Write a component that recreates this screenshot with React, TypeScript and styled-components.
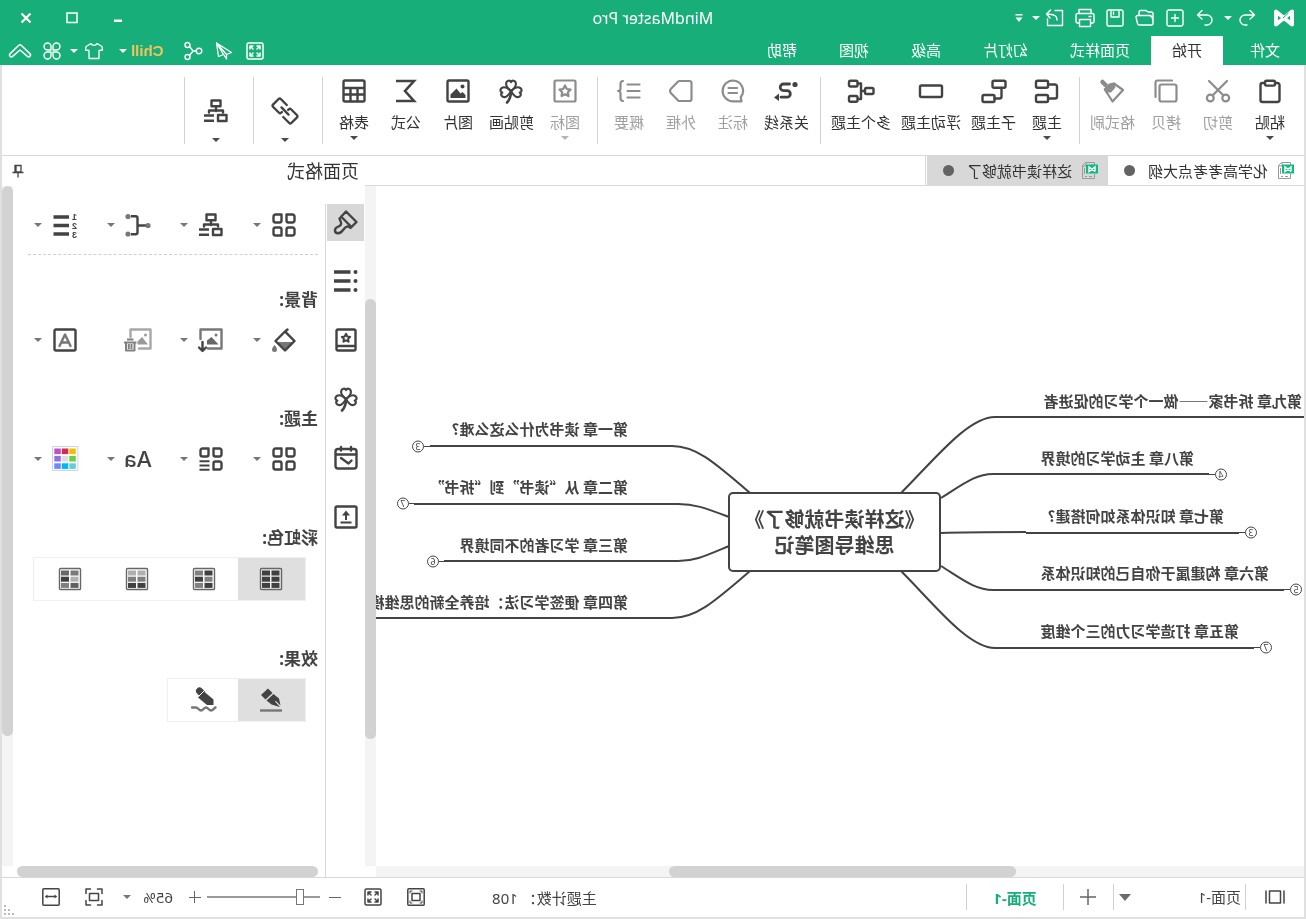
import React from 'react';
import styled, { createGlobalStyle } from 'styled-components';

const green = '#17ae7a';
const ink = '#434343';
const dim = '#8c8c8c';
const line = '#d9d9d9';
const uiFont = "'Noto Sans', 'Noto Sans CJK SC', sans-serif";
const cjkFont = "'Noto Sans CJK SC', 'Noto Sans', sans-serif";

const GlobalStyle = createGlobalStyle`
  * { box-sizing: border-box; }
  body { margin: 0; background: #fff; font-family: ${uiFont}; font-size: 15px; color: #333; }
  button, select, input { font: inherit; color: inherit; margin: 0; padding: 0; border: 0; background: none; }
  svg { display: block; flex: none; overflow: visible; }
`;

/* ---------- shell ---------- */

const Shell = styled.div`
  display: flex;
  flex-direction: column;
  height: 100vh;
  min-height: 800px;
  overflow: hidden;
  transform: scaleX(-1);
`;

const Header = styled.header`
  flex: none;
  background: ${green};
  color: #fff;
`;

const Frame = styled.div`
  flex: 1;
  min-height: 0;
  display: flex;
  flex-direction: column;
  border: 2px solid #e0e0e0;
  border-top: 0;
`;

const TitleBar = styled.div`
  display: grid;
  grid-template-columns: 1fr auto 1fr;
  align-items: center;
  height: 36px;
`;

const QuickAccess = styled.div`
  display: flex;
  align-items: center;
  padding-left: 12px;
`;

const Logo = styled.span`
  margin-right: 12px;
`;

const QuickButton = styled.button<{ $w?: number }>`
  display: flex;
  align-items: center;
  justify-content: center;
  width: ${(p) => p.$w ?? 30}px;
  height: 30px;
`;

const CaretButton = styled.button`
  display: flex;
  align-items: center;
  width: 12px;
  height: 30px;
`;

const Title = styled.h1`
  margin: 0;
  font-size: 16px;
  line-height: 36px;
  font-weight: 400;
`;

const WindowControls = styled.div`
  display: flex;
  justify-content: flex-end;
  padding-right: 3px;
`;

const WindowButton = styled.button`
  display: flex;
  align-items: center;
  justify-content: center;
  width: 46px;
  height: 32px;
`;

const Caret = styled.i<{ $color?: string }>`
  flex: none;
  width: 8px;
  height: 4px;
  border: 4px solid transparent;
  border-bottom-width: 0;
  border-top-color: ${(p) => p.$color ?? '#444'};
`;

const MenuRow = styled.nav`
  display: flex;
  height: 29px;
`;

const MenuTab = styled.button<{ $active?: boolean; $file?: boolean }>`
  padding: 0 ${(p) => (p.$file ? '27px 0 26px' : '21px')};
  line-height: 29px;
  color: ${(p) => (p.$active ? '#333' : '#fff')};
  background: ${(p) => (p.$active ? '#fff' : 'transparent')};
`;

const MenuTools = styled.div`
  display: flex;
  align-items: center;
  margin-left: auto;
  padding-right: 9px;
`;

const MenuIcon = styled.button`
  display: flex;
  align-items: center;
  justify-content: center;
  width: 31px;
  height: 29px;
`;

const MenuDrop = styled.button<{ $gap: number; $before: number }>`
  display: flex;
  align-items: center;
  gap: ${(p) => p.$gap}px;
  height: 29px;
  margin-left: ${(p) => p.$before}px;
`;

const Chill = styled.span`
  color: #f5c35b;
  font-family: 'Liberation Sans', sans-serif;
  font-weight: 700;
`;

/* ---------- ribbon ---------- */

const Ribbon = styled.div`
  flex: none;
  display: flex;
  height: 91px;
  padding-left: 2px;
  border-bottom: 1px solid ${line};
`;

const RibbonGroup = styled.div`
  display: flex;
  position: relative;
  padding: 0 6px;
  &::after {
    content: '';
    position: absolute;
    right: 0;
    top: 12px;
    width: 1px;
    height: 67px;
    background: #d2d2d2;
  }
`;

const RibbonButton = styled.button<{ $dim?: boolean }>`
  display: flex;
  flex-direction: column;
  align-items: center;
  min-width: 52px;
  padding: 14px 5px 0;
  color: ${(p) => (p.$dim ? dim : ink)};
`;

const RibbonLabel = styled.span<{ $dim?: boolean }>`
  margin: 9px 0 4px;
  line-height: 20px;
  color: ${(p) => (p.$dim ? '#a0a0a0' : '#333')};
`;

const RibbonSplit = styled.button`
  display: flex;
  flex-direction: column;
  align-items: center;
  gap: 15px;
  width: 57px;
  padding: 34px 0 0 5px;
  color: ${ink};
`;

/* ---------- workspace ---------- */

const Workspace = styled.div`
  flex: 1;
  min-height: 0;
  display: flex;
`;

const Center = styled.main`
  flex: 1;
  min-width: 0;
  display: flex;
  flex-direction: column;
`;

const DocTabs = styled.div`
  flex: none;
  display: flex;
  height: 30px;
  border-bottom: 1px solid ${line};
`;

const DocTab = styled.button<{ $active?: boolean }>`
  display: flex;
  align-items: center;
  padding: 0 16px 0 10px;
  background: ${(p) => (p.$active ? '#d8d8d8' : '#fff')};
`;

const DocTabEnd = styled.span`
  width: 2px;
  border-right: 1px solid ${line};
`;

const DocName = styled.span`
  margin: 0 13px 0 10px;
`;

const Dot = styled.i`
  width: 11px;
  height: 11px;
  border-radius: 50%;
  background: #636363;
`;

const CanvasGrid = styled.div`
  flex: 1;
  min-height: 0;
  display: grid;
  grid-template: minmax(0, 1fr) 11px / minmax(0, 1fr) 11px;
`;

const Canvas = styled.div`
  position: relative;
  display: grid;
  place-content: center;
  overflow: hidden;
`;

const Stage = styled.div`
  position: relative;
  width: 928px;
  height: 680px;
`;

const Links = styled.svg`
  width: 100%;
  height: 100%;
`;

const Topic = styled.div`
  position: absolute;
  font-family: ${cjkFont};
  font-weight: 700;
  line-height: 20px;
  white-space: nowrap;
  color: ${ink};
`;

const RootTopic = styled.div`
  position: absolute;
  left: 363px;
  top: 306px;
  width: 213px;
  height: 80px;
  padding-top: 12px;
  border: 2px solid ${ink};
  border-radius: 5px;
  background: #fff;
  font: 700 20px/26px ${cjkFont};
  text-align: center;
  white-space: pre-line;
  color: ${ink};
`;

const VTrack = styled.div`
  background: #f4f4f4;
`;

const HTrack = styled.div`
  background: #f4f4f4;
`;

const VThumb = styled.div<{ $from: number; $size: number }>`
  position: relative;
  top: ${(p) => p.$from}%;
  height: ${(p) => p.$size}%;
  border-radius: 6px;
  background: #d2d2d2;
`;

const HThumb = styled.div<{ $from: number; $size: number }>`
  height: 11px;
  margin-left: ${(p) => p.$from}%;
  width: ${(p) => p.$size}%;
  border-radius: 6px;
  background: #d2d2d2;
`;

/* ---------- side panel ---------- */

const Panel = styled.aside`
  flex: none;
  width: 363px;
  display: flex;
  flex-direction: column;
`;

const PanelHead = styled.div`
  flex: none;
  display: flex;
  align-items: center;
  justify-content: space-between;
  height: 30px;
  padding: 0 10px 0 6px;
`;

const PanelTitle = styled.h2`
  margin: 0;
  font-size: 18px;
  line-height: 30px;
  font-weight: 400;
`;

const PlainButton = styled.button`
  display: flex;
  align-items: center;
  justify-content: center;
`;

const PanelBody = styled.div`
  flex: 1;
  min-height: 0;
  display: flex;
`;

const Tools = styled.div`
  flex: none;
  display: flex;
  flex-direction: column;
  gap: 22px;
  width: 39px;
  padding: 18px 1px 0;
`;

const ToolButton = styled.button<{ $active?: boolean }>`
  display: flex;
  align-items: center;
  justify-content: center;
  width: 37px;
  height: 37px;
  padding: 0 1px 1px 0;
  color: ${ink};
  background: ${(p) => (p.$active ? '#d8d8d8' : 'transparent')};
`;

const Content = styled.div`
  flex: 1;
  min-width: 0;
  display: flex;
  flex-direction: column;
  margin-top: 18px;
  border-left: 1px solid ${line};
`;

const Sections = styled.div`
  flex: 1;
  min-height: 0;
  overflow: hidden;
`;

const OptionRow = styled.div`
  display: flex;
  height: 42px;
  padding-left: 29px;
`;

const OptionButton = styled.button<{ $dim?: boolean }>`
  flex: none;
  display: flex;
  align-items: center;
  gap: 11px;
  width: 73px;
  color: ${(p) => (p.$dim ? '#9a9a9a' : ink)};
`;

const Rule = styled.hr`
  height: 0;
  margin: 8px 15px 33px 7px;
  border: 0;
  border-top: 1px dashed #cfcfcf;
`;

const Section = styled.section`
  margin-bottom: 46px;
`;

const Heading = styled.h3`
  margin: 0 0 7px 7px;
  font-size: 17px;
  line-height: 24px;
  font-weight: 700;
  color: ${ink};
`;

const AaGlyph = styled.span`
  width: 24px;
  font: 500 22px/30px Inter, sans-serif;
  display: flex;
  justify-content: center;
`;

const Segments = styled.div`
  display: inline-flex;
  height: 44px;
  margin-left: 19px;
  padding-right: 3px;
  border: 1px solid #f0f0f0;
  vertical-align: top;
`;

const Segment = styled.button<{ $active?: boolean }>`
  display: flex;
  align-items: center;
  justify-content: center;
  width: 67px;
  color: ${ink};
  background: ${(p) => (p.$active ? '#dfdfdf' : '#fff')};
`;

const PanelHBar = styled.div`
  flex: none;
  height: 11px;
  padding: 0 4px 0 7px;
`;

const PanelVBar = styled.div`
  flex: none;
  width: 11px;
  margin-bottom: 11px;
  background: #f4f4f4;
`;

/* ---------- status bar ---------- */

const StatusBar = styled.footer`
  flex: none;
  position: relative;
  display: flex;
  align-items: center;
  height: 40px;
  padding-bottom: 1px;
  border-top: 1px solid ${line};
  color: #444;
`;

const StatusCell = styled.button<{ $w: number }>`
  display: flex;
  align-items: center;
  justify-content: center;
  width: ${(p) => p.$w}px;
  height: 26px;
  border-right: 1px solid #d0d0d0;
`;

const PageSelectWrap = styled.label`
  position: relative;
  width: 132px;
  height: 26px;
  border-right: 1px solid #d0d0d0;
`;

const PageSelect = styled.select`
  appearance: none;
  width: 100%;
  height: 26px;
  padding-left: 4px;
`;

const PageCaret = styled.i`
  position: absolute;
  right: 5px;
  top: 10px;
  border: 6px solid transparent;
  border-top: 7px solid #6b6b6b;
  border-bottom: 0;
  pointer-events: none;
`;

const PageName = styled.span`
  color: ${green};
  font-weight: 700;
`;

const Count = styled.span`
  margin: 0 65px 0 auto;
  white-space: pre;
`;

const StatusIcon = styled.button<{ $w?: number; $before: number }>`
  display: flex;
  align-items: center;
  justify-content: center;
  width: ${(p) => p.$w ?? 22}px;
  height: 26px;
  margin-left: ${(p) => p.$before}px;
`;

const ZoomRange = styled.input`
  appearance: none;
  width: 113px;
  height: 20px;
  margin-left: 9px;
  background: linear-gradient(#999, #999) center / 100% 2px no-repeat;
  &::-webkit-slider-thumb {
    appearance: none;
    width: 8px;
    height: 16px;
    border: 1px solid #777;
    background: #fff;
  }
`;

const ZoomValue = styled.button`
  display: flex;
  align-items: center;
  justify-content: space-between;
  width: 50px;
  margin: 0 18px 0 16px;
`;

const Grip = styled.span`
  align-self: flex-end;
  margin: 0 2px 1px 26px;
`;

/* ---------- icons ---------- */

const Ico: React.FC<{ s?: number; w?: number; children: React.ReactNode }> = ({ s = 24, w = 2.4, children }) => (
  <svg width={s} height={s} viewBox={`0 0 ${s} ${s}`} fill="none" stroke="currentColor" strokeWidth={w} strokeLinejoin="round" strokeLinecap="round" aria-hidden="true">
    {children}
  </svg>
);

const F = { fill: 'currentColor', stroke: 'none' };

const PasteIcon = () => (
  <Ico><rect x="2.500" y="4" width="19" height="19" rx="2" /><rect x="7" y="1.800" width="10" height="4.800" rx="1.500" fill="#fff" /></Ico>
);
const CutIcon = () => (
  <Ico w={2.2}><circle cx="4.300" cy="19" r="3.400" /><circle cx="19.700" cy="19" r="3.400" /><path d="M3 2 17.500 16.500M21 2 6.500 16.500" /></Ico>
);
const CopyIcon = () => (
  <Ico w={2.2}><rect x="1.500" y="5.500" width="17" height="17" rx="2" /><path d="M6 1.500H20.500a2 2 0 0 1 2 2V18" /></Ico>
);
const FormatIcon = () => (
  <Ico w={2.2}><path d="M21.500 3 18.500 6" strokeWidth="4.500" /><path d="M10 4.500 1 11 11.500 22.500 18.500 11.500Z" /><path {...F} d="M10 3.500 8.500 8.500 13 13.500 18.500 13.500 20.500 10 15 4.500Z" /></Ico>
);
const TopicIcon = () => (
  <Ico><rect x="11" y="1.800" width="12" height="7" rx="1.500" /><rect x="11" y="16" width="12" height="7" rx="1.500" /><path d="M10 5.500H4a2 2 0 0 0-2 2V17.500a2 2 0 0 0 2 2H10" /></Ico>
);
const SubtopicIcon = () => (
  <Ico><rect x="-.5" y="1.800" width="13" height="7" rx="1.500" /><rect x="10.500" y="16" width="12" height="7" rx="1.500" /><path d="M3.500 9V17.500a2 2 0 0 0 2 2H10.500" /></Ico>
);
const FloatIcon = () => <Ico><rect x="1" y="6.500" width="22" height="11.500" rx="1.500" /></Ico>;
const MultiIcon = () => (
  <Ico><rect x="-.5" y="9" width="8.500" height="6" rx="1.500" /><rect x="15.500" y="1.800" width="8.500" height="5.700" rx="1.500" /><rect x="15.500" y="17" width="8.500" height="5.700" rx="1.500" /><path d="M8.500 12H12M15 4.500H12V20H15" /></Ico>
);
const RelationIcon = () => (
  <Ico w={2.8}><circle {...F} cx="3" cy="5.500" r="2.600" /><path d="M8.500 5H14.500a3.300 3.300 0 0 1 0 6.600H11a3.300 3.300 0 0 0 0 6.600H17" /><path {...F} d="M19 14.500 24 18.500 19 22Z" /></Ico>
);
const CalloutIcon = () => (
  <Ico w={2.2}><path d="M12 1.500a10.300 10.300 0 1 1 0 20.800H3.500l.8-4A10.300 10.300 0 0 1 12 1.500Z" /><path d="M8 9H16.500M8 14H16.500" /></Ico>
);
const BoundaryIcon = () => <Ico w={2.2}><path d="M3.500 2H13.500a2 2 0 0 1 1.400.6L22 9.800a3 3 0 0 1 0 4.400L14.900 21.400a2 2 0 0 1-1.400.6H3.500a2 2 0 0 1-2-2V4a2 2 0 0 1 2-2Z" /></Ico>;
const SummaryIcon = () => (
  <Ico w={2.2}><path d="M1.500 5.500H13.500M1.500 12H13.500M1.500 18.500H13.500M18 2c2 0 2.500 1 2.500 3V9.500c0 1.500.5 2.500 2.500 2.500-2 0-2.500 1-2.500 2.500V19c0 2-.5 3-2.500 3" /></Ico>
);
const star = 'M12 6.500 13.800 10 17.600 10.500 14.800 13.200 15.500 17 12 15.200 8.500 17 9.200 13.200 6.400 10.500 10.200 10Z';
const MarkIcon = () => <Ico w={2.2}><rect x="1.500" y="1.500" width="21" height="21" rx="1.500" /><path d={star} /></Ico>;
const leaf = 'M0 0C-3.500-2.800-5.200-4.600-4.900-7.400-4.500-10.800-1-11.200 0-8.800 1-11.200 4.500-10.800 4.900-7.400 5.200-4.600 3.500-2.800 0 0Z';
const CloverIcon = () => (
  <Ico w={2.1}>
    <g transform="translate(12 12)"><path d={leaf} /><path d={leaf} transform="rotate(100)" /><path d={leaf} transform="rotate(-100)" /></g>
    <path d="M12 12C12 17 13.500 21 16 23.500" strokeWidth="2.600" />
  </Ico>
);
const PictureIcon = () => (
  <Ico><rect x="1.500" y="1.500" width="21" height="21" rx="1.500" /><circle {...F} cx="7.500" cy="7.500" r="2" /><path {...F} d="M4.500 19V16L7.500 13 9.500 14.500 13.500 9.500 19.500 15.500V19Z" /></Ico>
);
const SigmaIcon = () => <Ico w={2.6}><path strokeLinejoin="miter" strokeLinecap="butt" d="M22 2H4L13 12 4 22H22" /></Ico>;
const TableIcon = () => <Ico><rect x="1.500" y="1.500" width="21" height="21" rx="1.500" /><path d="M2 9H22M2 15.500H22M8.500 9V22M15.500 9V22" /></Ico>;
const LinkIcon = () => (
  <Ico><g transform="rotate(-45 12 12)"><path d="M9 17.500H.5A1.500 1.500 0 0 1-1 16V8A1.500 1.500 0 0 1 .5 6.500H9A1.500 1.500 0 0 1 10.500 8V9M15 6.500H23.500A1.500 1.500 0 0 1 25 8V16A1.500 1.500 0 0 1 23.500 17.500H15A1.500 1.500 0 0 1 13.500 16V15M7 12H17" /></g></Ico>
);
const OrgIcon = () => (
  <Ico><rect x="7.500" y="1.500" width="9" height="5.800" /><path d="M12 8V12M5 13.500V11.500H19V13.500" /><rect x="1.500" y="16" width="8.500" height="6" /><path strokeLinecap="butt" d="M14 16.500H24M14 21.800H24" /></Ico>
);
const GridIcon: React.FC<{ lines?: boolean }> = ({ lines }) => (
  <Ico>
    <path d="M1.500 3.500a2 2 0 0 1 2-2H9.500V7.500a2 2 0 0 1-2 2H3.500a2 2 0 0 1-2-2Z" />
    <path d="M22.500 3.500a2 2 0 0 0-2-2H14.500V7.500a2 2 0 0 0 2 2H20.500a2 2 0 0 0 2-2Z" />
    <path d="M1.500 16.500a2 2 0 0 1 2-2H7.500a2 2 0 0 1 2 2V22.500H3.500a2 2 0 0 1-2-2Z" />
    {lines
      ? <path strokeWidth="2" strokeLinecap="butt" d="M13.500 14.200H23.500M13.500 18.500H23.500M13.500 22.800H23.500" />
      : <path d="M22.500 16.500a2 2 0 0 0-2-2H16.500a2 2 0 0 0-2 2V22.500H20.500a2 2 0 0 0 2-2Z" />}
  </Ico>
);
const BranchIcon = () => (
  <Ico><path strokeLinecap="butt" d="M4 12.500H12M19 3.300H14.500a2 2 0 0 0-2 2V19.300a2 2 0 0 0 2 2H19" /><g {...F} fill="#777"><circle cx="2" cy="12.500" r="2.600" /><circle cx="22" cy="3.500" r="2.600" /><circle cx="22" cy="21" r="2.600" /></g></Ico>
);
const NumberListIcon = () => (
  <Ico w={3.4}><path strokeLinecap="butt" d="M8 4H23.500M8 12.500H23.500M8 21H23.500" /><g {...F} fontSize="9" fontWeight="700" fontFamily="Liberation Sans, sans-serif"><text x="0" y="7">1</text><text x="0" y="16">2</text><text x="0" y="25">3</text></g></Ico>
);
const BucketIcon = () => (
  <Ico><path {...F} fill="#777" d="M3 14H19L11 21.500Z" /><path d="M8.500 1.500 11.500 4 20.500 13 11 22.500 1.500 13 11 3.500" /><path {...F} fill="#777" d="M21.500 17c1.500 2 2.500 3 2.500 4.500a2.500 2.500 0 0 1-5 0c0-1.500 1-2.500 2.500-4.500Z" /></Ico>
);
const ImageDownIcon = () => (
  <Ico><path stroke="#777" d="M22.500 11V1.500H1.500V20.500H15" /><circle {...F} fill="#777" cx="7" cy="7" r="1.500" /><path {...F} fill="#666" d="M4.500 16.500 11.500 9 16 12.500V16.500Z" /><path d="M20.500 14V22.500M17 19.500 20.500 23 24 19.500" /></Ico>
);
const ImageTrashIcon = () => (
  <Ico><g transform="translate(-2 0)"><path stroke="#a8a8a8" d="M21.500 9V1.500H1.500V20.500H13" /><circle {...F} cx="6.500" cy="7" r="1.500" /><path {...F} d="M4 16.500 10 9 14.500 13.500V16.500Z" /><path stroke="#808080" strokeWidth="2" strokeLinecap="butt" d="M15.500 14.500H28M18.500 11.500H25M17.500 15V22.500H26V15M20.500 16V21M23.200 16V21" /></g></Ico>
);
const TextBoxIcon = () => <Ico><rect x="1.500" y="1.500" width="21" height="21" rx="1.500" /><path stroke="#777" d="M6.500 18 12 6.500 17.500 18M8.500 14.500H15.500" /></Ico>;
const palette = ['#f0c000', '#dc2850', '#c050c8', '#70cc40', '#dcdcdc', '#9070e8', '#68ccd8', '#00b8f0', '#7088ff'];
const PaletteIcon = () => (
  <Ico w={1}><rect x="-.5" y="-.5" width="25" height="24" stroke="#cdd5e8" />{palette.map((c, i) => <rect key={c} x={1.2 + (i % 3) * 7.5} y={1.5 + Math.floor(i / 3) * 7.4} width="6.500" height="5.600" fill={c} stroke="none" />)}</Ico>
);
const CellsIcon: React.FC<{ cells: string[] }> = ({ cells }) => (
  <Ico s={22} w={1.4}><rect x=".5" y=".5" width="21" height="21" rx="1" stroke="#666" fill="#fff" fillOpacity=".5" />{cells.map((c, i) => <rect key={i} x={2.5 + (i % 2) * 9.5} y={2.5 + Math.floor(i / 2) * 6.2} width="8" height="5" fill={c} stroke="none" />)}</Ico>
);
const PenIcon = () => (
  <Ico><path {...F} d="M15 .5 22 7 17.500 11.500 10.500 5Z" /><path {...F} d="M9.500 6 16.500 12.500 11.500 16.500 3 19 8 13.500 7.300 12.700 2.500 17.500 4 10.500Z" /><path stroke="#777" strokeLinecap="butt" d="M1 22.500H23" /></Ico>
);
const PencilIcon = () => (
  <Ico><path d="M14.500 5 16.500 3" strokeWidth="7" strokeLinecap="round" /><path {...F} d="M12 3.500 18 9.500 9 17H2.500V11.500Z" /><path stroke="#fff" strokeWidth="1" d="M12 3 18.500 9.500" /><path stroke="#777" d="M.5 19.500C2 20 3 22.500 5 22.500s3-3 5-3 3 3 5 3 3-3 5-3H24" /></Ico>
);
const BrushIcon = () => (
  <Ico><path d="M12 1.500 1.500 12 7.500 18C9 16.500 10 16 12 17 15 18.500 16 23.500 20 23.300 24 23 24 18.500 20.500 17 17 15.500 16 14 17.500 11L18.500 8.500ZM17 6.500 7 16.500" /></Ico>
);
const BulletsIcon = () => (
  <Ico w={3.4}><path strokeLinecap="butt" d="M7.500 3H24M7.500 12H24M7.500 21H24" /><g {...F}><circle cx="2.500" cy="3" r="2" /><circle cx="2.500" cy="12" r="2" /><circle cx="2.500" cy="21" r="2" /></g></Ico>
);
const BookIcon = () => <Ico><rect x="2.500" y="1.500" width="19" height="21" rx="1.500" /><path d="M3 18H21" /><path strokeWidth="2" d="M12 5.800 13.300 8.500 16.200 8.900 14.100 10.900 14.600 13.700 12 12.300 9.400 13.700 9.900 10.900 7.800 8.900 10.700 8.500Z" /></Ico>;
const CalendarIcon = () => <Ico><rect x="1.500" y="3" width="21" height="19.500" rx="2.500" /><path d="M2 8.500H22M7 1V4.500M17 1V4.500M6.500 14.500 9.500 17.500 17 12" /></Ico>;
const UploadIcon = () => <Ico><rect x="1.500" y="1.500" width="21" height="21" rx="1.500" /><path strokeWidth="2" strokeLinecap="butt" d="M12 8V15M6.500 17.500H17.500" /><path {...F} d="M12 5.500 16 10.500H8Z" /></Ico>;

const LogoIcon = () => (
  <svg width="20" height="18" viewBox="0 0 20 18" aria-hidden="true">
    <path fill="none" stroke="#fff" strokeWidth="4" strokeLinejoin="round" d="M2 2.500V15.500L18 2.500V15.500Z" />
    <path stroke={green} strokeWidth="1" d="M5.500 4 11 9" />
  </svg>
);
const UndoIcon = () => <Ico s={18} w={1.4}><path d="M6 1.500 1.500 6 6 10M2 6H11a5 5 0 0 1 0 10H9" /></Ico>;
const RedoIcon = () => <Ico s={18} w={1.4}><path d="M12 1.500 16.500 6 12 10M16 6H7a5 5 0 0 0 0 10H9" /></Ico>;
const NewIcon = () => <Ico s={18} w={1.4}><rect x="1" y="1" width="16" height="16" rx="2" /><path d="M9 5.500V12.500M5.500 9H12.500" /></Ico>;
const OpenIcon = () => <Ico s={18} w={1.4}><path d="M1 14V4.500A1.500 1.500 0 0 1 2.500 3H6L8 1.500H13.500A1.500 1.500 0 0 1 15 3V6M3 6.500H16.500a1.500 1.500 0 0 1 1.400 2L16.500 14.500a2 2 0 0 1-2 1.500H2.500A1.500 1.500 0 0 1 1 14C1 11 1.500 6.500 5 6.500" /></Ico>;
const SaveIcon = () => <Ico s={18} w={1.4}><rect x="1" y="1" width="16" height="16" rx="1.500" /><path d="M5 1V8H13V1M10.500 3V5.500" /></Ico>;
const PrintIcon = () => <Ico s={20} w={1.4}><path d="M4 5V1.500H16V5M4 15H2.500A1.500 1.500 0 0 1 1 13.500V7A1.500 1.500 0 0 1 2.500 5.500H17.500A1.500 1.500 0 0 1 19 7V13.500A1.500 1.500 0 0 1 17.500 15H16M4.500 11.500H15.500V18.500H4.500ZM4 8.500H6" /></Ico>;
const ExportIcon = () => <Ico s={18} w={1.4}><path d="M9 1.500H1.500V16.500H16.500V10M7 11C7 6.500 10 5.500 17 5M13.500 1 17.500 5 14 9" /></Ico>;
const FullIcon: React.FC<{ s?: number }> = ({ s = 18 }) => (
  <Ico s={s} w={1.5}><rect x="1" y="1" width="16" height="16" rx="1.500" /><path d="M7 4H4V7M11 4H14V7M7 14H4V11M11 14H14V11M4.500 4.500 7 7M13.500 4.500 11 7M4.500 13.500 7 11M13.500 13.500 11 11" /></Ico>
);
const SendIcon = () => <Ico s={18} w={1.3}><path d="M16.500 1 1.500 10.500 6.500 12.500ZM16.500 1 14.500 14.500 9.500 12.500ZM16.500 1 6.500 12.500V17L9 13" /></Ico>;
const ShareIcon = () => <Ico s={18} w={1.4}><circle cx="3" cy="9" r="2.800" /><circle cx="14.500" cy="3" r="2.500" /><circle cx="14.500" cy="15" r="2.500" /><path d="M5.500 9H9L12.500 4.500M9 9 12.500 13.500" /></Ico>;
const ShirtIcon = () => <Ico s={18} w={1.3}><path d="M6 1.500 1 4.500.5 8 4 8.500V16.500H14V8.500L17.500 8 17 4.500 12 1.500C11 4 7 4 6 1.500Z" /></Ico>;
const AppsIcon = () => <Ico s={18} w={1.4}><path d="M8 8H4.500A3.500 3.500 0 1 1 8 4.500ZM10 8V4.500A3.500 3.500 0 1 1 13.500 8ZM8 10V13.500A3.500 3.500 0 1 1 4.500 10ZM10 10H13.500A3.500 3.500 0 1 1 10 13.500Z" /></Ico>;
const CollapseIcon = () => <svg width="22" height="16" viewBox="0 0 22 16" fill="none" stroke="#fff" strokeWidth="1.500" strokeLinejoin="round"><path d="M9.800 2.200a1.800 1.800 0 0 1 2.400 0L20.800 10.600a1.800 1.800 0 0 1-2.400 2.800L11 7 3.600 13.400a1.800 1.800 0 0 1-2.400-2.800Z" /></svg>;
const DocIcon = () => (
  <svg width="16" height="17" viewBox="0 0 16 17" fill="none" stroke="#999" strokeWidth="1" aria-hidden="true">
    <path d="M3.500 3V.5H12.500L15.500 3.500V16.500H3.500V12M12 .5V4H15.500M6 14.500H9M11 14.500H13M13.500 6V12" />
    <rect x="0" y="2.500" width="12" height="9" fill="#10b981" stroke="none" />
    <path stroke="#fff" strokeWidth="1.400" d="M3 9.500V5L9 9.500V5L3 9.500" />
  </svg>
);
const PinIcon = () => <svg width="12" height="14" viewBox="0 0 12 14" fill="none" stroke="#444" strokeWidth="1.300"><path d="M3 1.500H9V8H3ZM.5 8.500H11.500M6 8.500V13.500M8 1.500V8" /></svg>;
const PagesIcon = () => <Ico s={20} w={1.5}><path d="M1 4V16M19 4V16" /><rect x="4.500" y="4" width="11" height="12" /></Ico>;
const FitIcon = () => <Ico s={18} w={1.5}><rect x=".8" y=".8" width="16.400" height="16.400" rx="1" /><rect x="5" y="5.500" width="8" height="7" /><path strokeWidth="1" d="M3 5V3H5M13 3H15V5M3 13V15H5M13 15H15V13" /></Ico>;
const FocusIcon = () => <Ico s={18} w={1.5}><path d="M1 5.500V1H5.500M12.500 1H17V5.500M1 12.500V17H5.500M12.500 17H17V12.500" /><rect x="4.500" y="5.500" width="9" height="7" /></Ico>;
const WidthIcon = () => <Ico s={18} w={1.5}><rect x=".8" y=".8" width="16.400" height="16.400" rx="1" /><path d="M4 8.500H14" /><path {...F} d="M3 8.500 5.500 6.500V10.500ZM15 8.500 12.500 6.500V10.500Z" /></Ico>;

/* ---------- data ---------- */

type Cmd = { label: string; icon: React.ReactNode; dim?: boolean; caret?: boolean };

const groups: Cmd[][] = [
  [
    { label: '粘贴', icon: <PasteIcon />, caret: true },
    { label: '剪切', icon: <CutIcon />, dim: true },
    { label: '拷贝', icon: <CopyIcon />, dim: true },
    { label: '格式刷', icon: <FormatIcon />, dim: true },
  ],
  [
    { label: '主题', icon: <TopicIcon />, caret: true },
    { label: '子主题', icon: <SubtopicIcon /> },
    { label: '浮动主题', icon: <FloatIcon /> },
    { label: '多个主题', icon: <MultiIcon /> },
  ],
  [
    { label: '关系线', icon: <RelationIcon /> },
    { label: '标注', icon: <CalloutIcon />, dim: true },
    { label: '外框', icon: <BoundaryIcon />, dim: true },
    { label: '概要', icon: <SummaryIcon />, dim: true },
  ],
  [
    { label: '图标', icon: <MarkIcon />, dim: true, caret: true },
    { label: '剪贴画', icon: <CloverIcon /> },
    { label: '图片', icon: <PictureIcon /> },
    { label: '公式', icon: <SigmaIcon /> },
    { label: '表格', icon: <TableIcon />, caret: true },
  ],
];

const topics = [
  { text: '第九章 拆书家——做一个学习的促进者', x: 2, y: 205 },
  { text: '第八章 主动学习的境界', x: 110, y: 262 },
  { text: '第七章 知识体系如何搭建?', x: 80, y: 320 },
  { text: '第六章 构建属于你自己的知识体系', x: 35, y: 377 },
  { text: '第五章 打造学习力的三个维度', x: 65, y: 435 },
  { text: '第一章 读书为什么这么难?', x: 676, y: 233 },
  { text: '第二章 从“读书”到“拆书”', x: 676, y: 291 },
  { text: '第三章 学习者的不同境界', x: 676, y: 349 },
  { text: '第四章 便签学习法：培养全新的思维模', x: 676, y: 406 },
];

const branches = [
  'M403 307C369 273 336 231 309 231H0',
  'M363 312C342 299 329 288 311 288H95',
  'M363 347C340 346 320 346 278 346M278 347H65',
  'M363 380C342 393 329 404 311 404H20',
  'M403 385C369 419 336 462 309 462H50',
  'M554 307C592 274 609 260 632 260H874',
  'M575 331C599 322 609 318 626 318H890',
  'M575 360C599 370 609 375 626 375H860',
  'M554 385C592 418 609 432 632 432H928',
];

const badges = [
  { n: 4, x: 83, y: 288, dir: 1 },
  { n: 3, x: 53, y: 346, dir: 1 },
  { n: 5, x: 8, y: 403, dir: 1 },
  { n: 7, x: 38, y: 461, dir: 1 },
  { n: 3, x: 886, y: 260, dir: -1 },
  { n: 7, x: 901, y: 317, dir: -1 },
  { n: 6, x: 871, y: 375, dir: -1 },
];

const D = '#404040';
const M = '#808080';
const L = '#b0b0b0';
const rainbow = [
  [D, D, D, D, D, D],
  [D, M, M, D, D, M],
  [L, L, M, M, D, D],
  ['#7a7a7a', '#686868', L, D, '#606060', M],
];

const sideTools = [
  { name: '页面格式', icon: <BrushIcon /> },
  { name: '大纲', icon: <BulletsIcon /> },
  { name: '图标', icon: <BookIcon /> },
  { name: '剪贴画', icon: <CloverIcon /> },
  { name: '任务', icon: <CalendarIcon /> },
  { name: '导出', icon: <UploadIcon /> },
];

type Option = { name: string; icon: React.ReactNode; off?: boolean };

const Options: React.FC<{ items: Option[] }> = ({ items }) => (
  <OptionRow>
    {items.map((o) => (
      <OptionButton key={o.name} aria-label={o.name} $dim={o.off} disabled={o.off}>
        {o.icon}
        {!o.off && <Caret $color="#777" />}
      </OptionButton>
    ))}
  </OptionRow>
);

const MindMap = () => (
  <Stage>
    <Links viewBox="0 0 928 680" fill="none" stroke={ink} strokeWidth="2">
      {branches.map((d) => <path key={d} d={d} />)}
      {badges.map((b) => (
        <g key={`${b.x}-${b.y}`} strokeWidth="1">
          <path d={`M${b.x + 6 * b.dir} ${b.y + 0.5}H${b.x + 12 * b.dir}`} />
          <circle cx={b.x} cy={b.y + 0.5} r="5.500" />
          <text x={b.x} y={b.y + 4} fill={ink} stroke="none" fontSize="9" textAnchor="middle">{b.n}</text>
        </g>
      ))}
    </Links>
    {topics.map((t) => (
      <Topic key={t.text} style={{ left: t.x, top: t.y }}>{t.text}</Topic>
    ))}
    <RootTopic>{'《这样读书就够了》\n思维导图笔记'}</RootTopic>
  </Stage>
);

const App: React.FC = () => (
  <>
    <GlobalStyle />
    <Shell lang="zh-CN">
      <Header>
        <TitleBar>
          <QuickAccess>
            <Logo><LogoIcon /></Logo>
            <QuickButton aria-label="撤销"><UndoIcon /></QuickButton>
            <CaretButton aria-label="撤销列表"><Caret $color="#fff" /></CaretButton>
            <QuickButton aria-label="重做"><RedoIcon /></QuickButton>
            <QuickButton aria-label="新建"><NewIcon /></QuickButton>
            <QuickButton aria-label="打开"><OpenIcon /></QuickButton>
            <QuickButton aria-label="保存"><SaveIcon /></QuickButton>
            <QuickButton aria-label="打印"><PrintIcon /></QuickButton>
            <QuickButton aria-label="导出"><ExportIcon /></QuickButton>
            <CaretButton aria-label="导出列表"><Caret $color="#fff" /></CaretButton>
            <QuickButton $w={18} aria-label="自定义">
              <svg width="8" height="10" viewBox="0 0 8 10" fill="#fff"><path d="M.5 1H7.500V2.500H.5ZM.5 4.500H7.500L4 9Z" /></svg>
            </QuickButton>
          </QuickAccess>
          <Title>MindMaster Pro</Title>
          <WindowControls>
            <WindowButton aria-label="最小化"><svg width="8" height="8" viewBox="0 0 8 8"><path fill="#fff" d="M0 5.500H8V8H0Z" /></svg></WindowButton>
            <WindowButton aria-label="最大化"><svg width="12" height="12" viewBox="0 0 12 12"><path fill="none" stroke="#fff" strokeWidth="1.500" d="M1 1H11V10.500H1Z" /></svg></WindowButton>
            <WindowButton aria-label="关闭"><svg width="10" height="10" viewBox="0 0 10 10"><path stroke="#fff" strokeWidth="2.200" d="M.5 .5 9.500 9.500M9.500 .5 .5 9.500" /></svg></WindowButton>
          </WindowControls>
        </TitleBar>
        <MenuRow>
          <MenuTab $file>文件</MenuTab>
          <MenuTab $active>开始</MenuTab>
          {['页面样式', '幻灯片', '高级', '视图', '帮助'].map((t) => <MenuTab key={t}>{t}</MenuTab>)}
          <MenuTools>
            <MenuIcon aria-label="全屏"><FullIcon /></MenuIcon>
            <MenuIcon aria-label="发送"><SendIcon /></MenuIcon>
            <MenuIcon aria-label="分享"><ShareIcon /></MenuIcon>
            <MenuDrop $gap={4} $before={14}><Chill>Chill</Chill><Caret $color="#fff" /></MenuDrop>
            <MenuDrop $gap={7} $before={16} aria-label="皮肤"><ShirtIcon /><Caret $color="#fff" /></MenuDrop>
            <MenuDrop $gap={0} $before={9} aria-label="应用"><AppsIcon /></MenuDrop>
            <MenuDrop $gap={0} $before={12} aria-label="收起功能区"><CollapseIcon /></MenuDrop>
          </MenuTools>
        </MenuRow>
      </Header>
      <Frame>
        <Ribbon>
          {groups.map((g, i) => (
            <RibbonGroup key={i}>
              {g.map((c) => (
                <RibbonButton key={c.label} $dim={c.dim}>
                  {c.icon}
                  <RibbonLabel $dim={c.dim}>{c.label}</RibbonLabel>
                  {c.caret && <Caret $color={c.dim ? '#b5b5b5' : '#444a5c'} />}
                </RibbonButton>
              ))}
            </RibbonGroup>
          ))}
          <RibbonGroup><RibbonSplit aria-label="超链接"><LinkIcon /><Caret $color="#444a5c" /></RibbonSplit></RibbonGroup>
          <RibbonGroup><RibbonSplit aria-label="布局"><OrgIcon /><Caret $color="#444a5c" /></RibbonSplit></RibbonGroup>
        </Ribbon>
        <Workspace>
          <Center>
            <DocTabs>
              <DocTab><DocIcon /><DocName>化学高考考点大纲</DocName><Dot /></DocTab>
              <DocTab $active><DocIcon /><DocName>这样读书就够了</DocName><Dot /></DocTab>
              <DocTabEnd />
            </DocTabs>
            <CanvasGrid>
              <Canvas><MindMap /></Canvas>
              <VTrack><VThumb $from={16.6} $size={64.7} /></VTrack>
              <HTrack><HThumb $from={31} $size={37.4} /></HTrack>
            </CanvasGrid>
          </Center>
          <Panel>
            <PanelHead>
              <PanelTitle>页面格式</PanelTitle>
              <PlainButton aria-label="固定"><PinIcon /></PlainButton>
            </PanelHead>
            <PanelBody>
              <Tools>
                {sideTools.map((t, i) => (
                  <ToolButton key={t.name} aria-label={t.name} $active={i === 0}>{t.icon}</ToolButton>
                ))}
              </Tools>
              <Content>
                <Sections>
                  <Options items={[
                    { name: '主题样式', icon: <GridIcon /> },
                    { name: '布局', icon: <OrgIcon /> },
                    { name: '连接线', icon: <BranchIcon /> },
                    { name: '编号', icon: <NumberListIcon /> },
                  ]} />
                  <Rule />
                  <Section>
                    <Heading>背景:</Heading>
                    <Options items={[
                      { name: '背景颜色', icon: <BucketIcon /> },
                      { name: '背景图片', icon: <ImageDownIcon /> },
                      { name: '移除背景', icon: <ImageTrashIcon />, off: true },
                      { name: '水印', icon: <TextBoxIcon /> },
                    ]} />
                  </Section>
                  <Section>
                    <Heading>主题:</Heading>
                    <Options items={[
                      { name: '主题', icon: <GridIcon /> },
                      { name: '主题列表', icon: <GridIcon lines /> },
                      { name: '字体', icon: <AaGlyph>Aa</AaGlyph> },
                      { name: '颜色', icon: <PaletteIcon /> },
                    ]} />
                  </Section>
                  <Section>
                    <Heading>彩虹色:</Heading>
                    <Segments>
                      {rainbow.map((c, i) => (
                        <Segment key={i} $active={i === 0} aria-pressed={i === 0} aria-label={`彩虹色 ${i + 1}`}><CellsIcon cells={c} /></Segment>
                      ))}
                    </Segments>
                  </Section>
                  <Section>
                    <Heading>效果:</Heading>
                    <Segments>
                      <Segment $active aria-pressed aria-label="标准"><PenIcon /></Segment>
                      <Segment aria-label="手绘"><PencilIcon /></Segment>
                    </Segments>
                  </Section>
                </Sections>
                <PanelHBar><HThumb $from={0} $size={100} /></PanelHBar>
              </Content>
              <PanelVBar><VThumb $from={0} $size={80.9} /></PanelVBar>
            </PanelBody>
          </Panel>
        </Workspace>
        <StatusBar>
          <StatusCell $w={59} aria-label="页面列表"><PagesIcon /></StatusCell>
          <PageSelectWrap>
            <PageSelect aria-label="页面"><option>页面-1</option></PageSelect>
            <PageCaret />
          </PageSelectWrap>
          <StatusCell $w={50} aria-label="添加页面">
            <svg width="16" height="16" viewBox="0 0 16 16" stroke="#666" strokeWidth="1.500"><path d="M8 0V16M0 8H16" /></svg>
          </StatusCell>
          <StatusCell $w={97}><PageName>页面-1</PageName></StatusCell>
          <Count>主题计数： 108</Count>
          <StatusIcon $before={0} aria-label="适应窗口"><FitIcon /></StatusIcon>
          <StatusIcon $before={21} aria-label="全屏"><FullIcon /></StatusIcon>
          <StatusIcon $before={21} $w={12} aria-label="缩小"><svg width="12" height="12" viewBox="0 0 12 12"><path stroke="#666" d="M0 6.500H12" /></svg></StatusIcon>
          <ZoomRange type="range" min={0} max={100} defaultValue={15} aria-label="缩放" />
          <StatusIcon $before={6} $w={12} aria-label="放大"><svg width="12" height="12" viewBox="0 0 12 12"><path stroke="#666" d="M0 6.500H12M6.500 0V12" /></svg></StatusIcon>
          <ZoomValue>65%<Caret $color="#777" /></ZoomValue>
          <StatusIcon $before={0} aria-label="聚焦"><FocusIcon /></StatusIcon>
          <StatusIcon $before={21} aria-label="适应宽度"><WidthIcon /></StatusIcon>
          <Grip>
            <svg width="10" height="10" viewBox="0 0 10 10" fill="#bbb"><path d="M8 0h2v2H8zM4 4h2v2H4zM8 4h2v2H8zM0 8h2v2H0zM4 8h2v2H4zM8 8h2v2H8z" /></svg>
          </Grip>
        </StatusBar>
      </Frame>
    </Shell>
  </>
);

export default App;
